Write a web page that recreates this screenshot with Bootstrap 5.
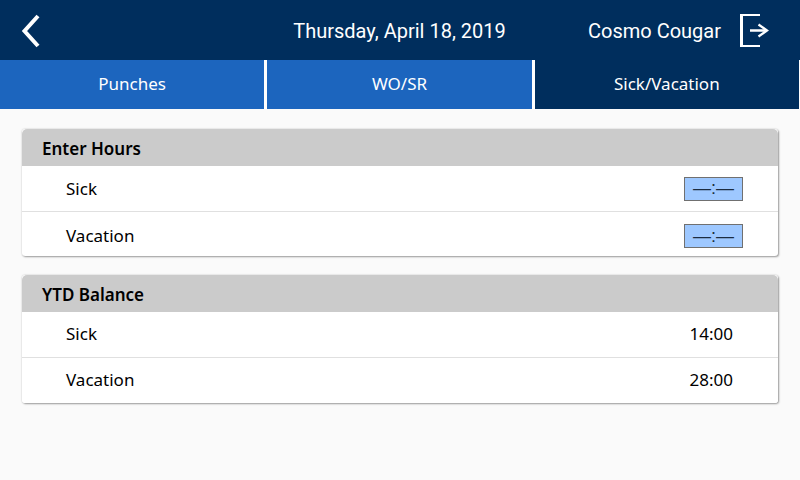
<!DOCTYPE html>
<html lang="en">
<head>
<meta charset="utf-8">
<meta name="viewport" content="width=device-width, initial-scale=1">
<title>Sick/Vacation</title>
<link href="https://cdn.jsdelivr.net/npm/bootstrap@5.3.0/dist/css/bootstrap.min.css" rel="stylesheet">
<style>
  body { background: #fafafa; color: #000; font-family: "Noto Sans", sans-serif; font-size: 17px; line-height: 24px; }
  .topbar { background: #002e5d; color: #fff; height: 60px; padding: 2px 31px 0 20px; font-family: Roboto, sans-serif; font-size: 20px; }
  .topbar .today { padding-left: 10px; }
  .topbar .btn { --bs-btn-color: #fff; }
  .tabs { background: #fff; gap: 3px; padding-right: 1px; }
  .tabs .nav-link { background: #1c65be; color: #fff; border-radius: 0; padding: 12px 0 13px; }
  .tabs .nav-link.active { background: #002e5d; color: #fff; }
  main { padding: 20px 22px; }
  .panel { border: 0; border-radius: 3px; overflow: hidden; margin-bottom: 19px; box-shadow: 0 0 2px rgba(0,0,0,.2), 1px 1px 2px rgba(0,0,0,.35); color: #000; }
  .panel .card-header { background: #cbcbcb; border: 0; font-size: 17px; font-weight: 600; line-height: 24px; padding: 8px 20px 5px; }
  .entry { min-height: 45px; padding: 0 35px 0 44px; }
  .entry + .entry { border-top: 1px solid #e0e0e0; padding-top: 4px; }
  .time-box { width: 59px; height: 24px; background: #9ec8ff; border: 1px solid #707070; border-radius: 0; padding: 0; text-align: center; font-family: "Liberation Sans", sans-serif; font-size: 18px; line-height: 22px; }
  .time-box::placeholder { color: #1c2c40; opacity: 1; }
  .balance th, .balance td { height: 45px; padding: 0 45px 0 44px; background: #fff; color: #000; font-weight: 400; vertical-align: middle; border: 0; }
  .balance tr + tr > * { border-top: 1px solid #e0e0e0; height: 46px; }
</style>
<script src="https://cdn.jsdelivr.net/npm/bootstrap@5.3.0/dist/js/bootstrap.bundle.min.js" defer></script>
</head>
<body>
<header class="topbar row g-0 align-items-center">
  <div class="col">
    <button type="button" class="btn p-0 border-0 d-block" aria-label="Back">
      <svg class="d-block" width="22" height="34" viewBox="0 1 22 34" fill="none" stroke="#fff" stroke-width="4"><path d="M18 3 4.500 18 18 33"/></svg>
    </button>
  </div>
  <div class="today col-auto">Thursday, April 18, 2019</div>
  <div class="col d-flex justify-content-end align-items-center">
    <span>Cosmo Cougar</span>
    <button type="button" class="btn p-0 border-0 ms-3" aria-label="Sign out">
      <svg class="d-block" width="32" height="34" viewBox="0 1 32 34" fill="none" stroke="#fff"><path d="M23 2H4v31h19" stroke-width="2"/><path d="M4.500 1v33" stroke-width="3"/><path d="M13 17.500h17" stroke-width="2.500"/><path d="M21.500 11.500l8.500 6-8.500 6" stroke-width="2.300"/></svg>
    </button>
  </div>
</header>
<nav class="tabs nav nav-fill nav-justified flex-nowrap">
  <a class="nav-link" href="#">Punches</a>
  <a class="nav-link" href="#">WO/SR</a>
  <a class="nav-link active" href="#" aria-current="page">Sick/Vacation</a>
</nav>
<main>
  <section class="panel card">
    <h2 class="card-header">Enter Hours</h2>
    <div class="entry d-flex align-items-center justify-content-between">
      <label for="sick">Sick</label>
      <input id="sick" class="time-box" type="text" placeholder="—:—">
    </div>
    <div class="entry d-flex align-items-center justify-content-between">
      <label for="vacation">Vacation</label>
      <input id="vacation" class="time-box" type="text" placeholder="—:—">
    </div>
  </section>
  <section class="panel card">
    <h2 class="card-header">YTD Balance</h2>
    <table class="balance table mb-0">
      <tbody>
        <tr><th scope="row">Sick</th><td class="text-end">14:00</td></tr>
        <tr><th scope="row">Vacation</th><td class="text-end">28:00</td></tr>
      </tbody>
    </table>
  </section>
</main>
</body>
</html>
